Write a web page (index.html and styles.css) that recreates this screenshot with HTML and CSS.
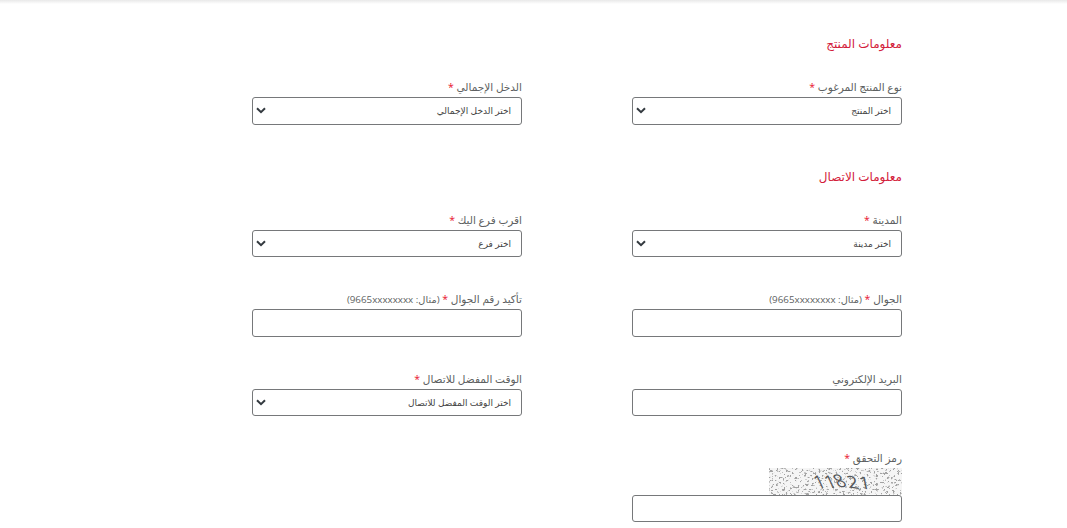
FILE: index.html
```html
<!DOCTYPE html>
<html lang="ar" dir="rtl">
<head>
    <meta charset="UTF-8">
    <title>Title</title>
    <link rel="stylesheet" href="styles.css">
</head>
<body>
    <div class="topbar"></div>
    <form class="form">
        <h3 class="title first">معلومات المنتج</h3>
        <div class="row">
            <div class="field">
                <label>نوع المنتج المرغوب <span class="req">*</span></label>
                <div class="sel">
                    <select><option>اختر المنتج</option></select>
                    <svg class="arrow" viewBox="0 0 10 7"><path d="M1 1.2 5 5.2 9 1.2" fill="none" stroke="#343a40" stroke-width="2"/></svg>
                </div>
            </div>
            <div class="field">
                <label>الدخل الإجمالي <span class="req">*</span></label>
                <div class="sel">
                    <select><option>اختر الدخل الإجمالي</option></select>
                    <svg class="arrow" viewBox="0 0 10 7"><path d="M1 1.2 5 5.2 9 1.2" fill="none" stroke="#343a40" stroke-width="2"/></svg>
                </div>
            </div>
        </div>
        <h3 class="title">معلومات الاتصال</h3>
        <div class="row">
            <div class="field">
                <label>المدينة <span class="req">*</span></label>
                <div class="sel">
                    <select><option>اختر مدينة</option></select>
                    <svg class="arrow" viewBox="0 0 10 7"><path d="M1 1.2 5 5.2 9 1.2" fill="none" stroke="#343a40" stroke-width="2"/></svg>
                </div>
            </div>
            <div class="field">
                <label>اقرب فرع اليك <span class="req">*</span></label>
                <div class="sel">
                    <select><option>اختر فرع</option></select>
                    <svg class="arrow" viewBox="0 0 10 7"><path d="M1 1.2 5 5.2 9 1.2" fill="none" stroke="#343a40" stroke-width="2"/></svg>
                </div>
            </div>
            <div class="field">
                <label>الجوال <span class="req">*</span> <span class="hint">(مثال: 9665xxxxxxxx)</span></label>
                <input type="text">
            </div>
            <div class="field">
                <label>تأكيد رقم الجوال <span class="req">*</span> <span class="hint">(مثال: 9665xxxxxxxx)</span></label>
                <input type="text">
            </div>
            <div class="field">
                <label>البريد الإلكتروني</label>
                <input type="text">
            </div>
            <div class="field">
                <label>الوقت المفضل للاتصال <span class="req">*</span></label>
                <div class="sel">
                    <select><option>اختر الوقت المفضل للاتصال</option></select>
                    <svg class="arrow" viewBox="0 0 10 7"><path d="M1 1.2 5 5.2 9 1.2" fill="none" stroke="#343a40" stroke-width="2"/></svg>
                </div>
            </div>
            <div class="field">
                <label>رمز التحقق <span class="req">*</span></label>
                <svg class="captcha" viewBox="0 0 133 27" preserveAspectRatio="none">
                    <filter id="noise" x="0" y="0" width="100%" height="100%">
                        <feTurbulence type="fractalNoise" baseFrequency="0.42" numOctaves="4" seed="11"/>
                        <feColorMatrix values="0 0 0 0 0.36  0 0 0 0 0.36  0 0 0 0 0.36  9 0 0 0 -5.2"/>
                    </filter>
                    <rect width="133" height="27" fill="#f5f5f5"/>
                    <rect width="133" height="27" filter="url(#noise)"/>
                    <text class="captcha-text" transform="translate(48 20) skewX(24)" rotate="0 0 -8 8 14" direction="ltr">11821</text>
                </svg>
                <input type="text">
            </div>
        </div>
    </form>
</body>
</html>
```

FILE: styles.css
```css
* {
    box-sizing: border-box;
}
html,body {
    margin: 0;
    padding: 0;
    background: #fff;
}
body {
    height: 528px;
    overflow: hidden;
    font-family: "Open Sans", "DejaVu Sans", sans-serif;
    color: #5d5f61;
}
.topbar {
    height: 4px;
    background: linear-gradient(#e9e9e9, #fff);
}
.form {
    width: 650px;
    margin: 0 165px 0 0;
}
.title {
    margin: 0;
    font-size: 12px;
    font-weight: normal;
    line-height: 16px;
    color: #d3203a;
    padding-top: 44px;
    padding-bottom: 27px;
}
.title.first {
    padding-top: 32px;
}
.row {
    display: grid;
    grid-template-columns: 270px 270px;
    column-gap: 110px;
    row-gap: 34px;
}
label {
    display: block;
    font-size: 10.5px;
    line-height: 14px;
    height: 18px;
    padding-top: 1px;
}
.hint {
    font-size: 9.8px;
}
.req {
    color: #e8112d;
}
.sel {
    position: relative;
}
select,input {
    display: block;
    width: 100%;
    height: 27.5px;
    border: 1px solid #76787a;
    border-radius: 3px;
    background: #fff;
}
select {
    appearance: none;
    padding: 0 10px 0 24px;
    font-family: inherit;
    font-size: 9px;
    color: #444;
}
.arrow {
    position: absolute;
    left: 4px;
    top: 10px;
    width: 10px;
    height: 7px;
}
.captcha {
    display: block;
    width: 133px;
    height: 26.5px;
}
.captcha-text {
    font-family: "Open Sans", sans-serif;
    font-size: 18px;
    letter-spacing: 0.5px;
    fill: #55585a;
}
```
